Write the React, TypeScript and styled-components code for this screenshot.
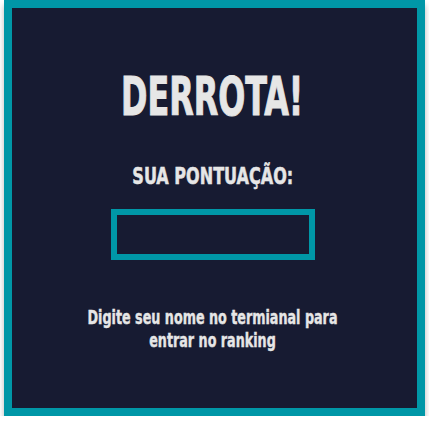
import React from "react";
import styled, { createGlobalStyle } from "styled-components";

const Global = createGlobalStyle`
  html, body { margin: 0; padding: 0; background: #ffffff; }
  body { font-family: "DejaVu Sans Condensed", "DejaVu Sans", "Liberation Sans", sans-serif; }
`;

const Panel = styled.div`
  box-sizing: border-box;
  margin: 0 4px;
  height: 416px;
  border: 8px solid #0097a7;
  background: #171b32;
  box-shadow: 0 5px 6px rgba(0, 0, 0, 0.28);
  display: flex;
  flex-direction: column;
  align-items: center;
  color: #e6e6e6;
  font-weight: 700;
  padding: 62px 4px 0 0;
`;

const Title = styled.h1`
  margin: 0;
  font-size: 54px;
  line-height: 54px;
  font-weight: 700;
  transform: scaleX(0.655);
  -webkit-text-stroke: 1px #e6e6e6;
`;

const Label = styled.h2`
  margin: 40px 0 0;
  font-size: 23px;
  line-height: 24px;
  font-weight: 700;
  transform: scaleX(0.775);
  -webkit-text-stroke: 0.5px #e6e6e6;
`;

const ScoreBox = styled.div`
  box-sizing: border-box;
  margin-top: 21px;
  width: 204px;
  height: 51px;
  border: 6px solid #0097a7;
`;

const Hint = styled.p`
  margin: 46px 0 0;
  font-size: 19px;
  line-height: 23px;
  text-align: center;
  transform: scaleX(0.745);
  width: 345px;
  -webkit-text-stroke: 0.4px #e6e6e6;
`;

export default function App() {
  return (
    <>
      <Global />
      <Panel>
        <Title>DERROTA!</Title>
        <Label>SUA PONTUAÇÃO:</Label>
        <ScoreBox />
        <Hint>Digite seu nome no termianal para entrar no ranking</Hint>
      </Panel>
    </>
  );
}
